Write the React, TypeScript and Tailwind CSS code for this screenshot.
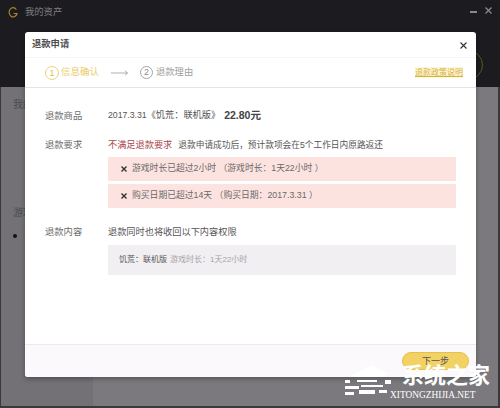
import React from "react";

const cjk = { fontFamily: '"Liberation Sans","Noto Sans CJK SC",sans-serif' };

function Row({ label, children, className }: { label: string; children: React.ReactNode; className?: string }) {
  return (
    <div className={"flex " + (className ?? "")}>
      <div className="w-[63px] shrink-0 text-[9.3px] leading-[16px] text-[#6b6b6b]">{label}</div>
      <div className="flex-1 min-w-0">{children}</div>
    </div>
  );
}

function Fail({ text }: { text: string }) {
  return (
    <div className="h-[24px] bg-[#fde3df] flex items-center pl-[13px] text-[8.8px] text-[#6a6a6a] whitespace-nowrap">
      <svg width="6" height="6" viewBox="0 0 6 6" className="shrink-0">
        <path d="M.5 .5L5.5 5.5M5.5 .5L.5 5.5" stroke="#333" strokeWidth="1.4" />
      </svg>
      <span className="ml-[5px]">{text}</span>
    </div>
  );
}

export default function App() {
  return (
    <div style={cjk} className="relative w-[500px] h-[408px] overflow-hidden bg-[#7b797d]">
      {/* Background window */}
      <div className="h-[87px] bg-[#1c1b1f] flex items-start justify-between pl-[8px] pr-[8px] pt-[5px]">
        <div className="flex items-center">
          <svg width="10" height="13" viewBox="0 0 10 13" fill="none">
            <path d="M8.3 3.5A4 4.6 0 1 0 9 7.5H5.5" stroke="#a8842a" strokeWidth="1.2" />
          </svg>
          <span className="ml-[7px] text-[9.3px] leading-[14px] text-[#807f82]">我的资产</span>
        </div>
        <div className="flex items-center gap-[8px] pt-[2px]">
          <div className="w-[7px] h-[2px] bg-[#8a898c] mt-[2px]" />
          <svg width="7" height="7" viewBox="0 0 7 7">
            <path d="M.5 .5L6.5 6.5M6.5 .5L.5 6.5" stroke="#8a898c" strokeWidth="1.3" />
          </svg>
        </div>
      </div>
      <div className="flex h-[321px] border-l border-r-2 border-b-2 border-[#39383b]">
        <div className="w-[92px] bg-[#737175] pl-[12px]">
          <div className="pt-[11px] text-[10px] leading-[14px] text-[#4c4b4e]">我的</div>
          <div className="pt-[94px] text-[10px] leading-[14px] text-[#4c4b4e]">游戏</div>
          <div className="pt-[14px] flex">
            <div className="w-[4px] h-[4px] rounded-full bg-[#141414]" />
          </div>
        </div>
        <div className="flex-1 bg-[#7b797d]" />
      </div>

      {/* Ring behind the dialog */}
      <div className="absolute left-[453px] top-[50px] w-[30px] h-[30px] rounded-full border border-[#5e5322]" />

      {/* Modal */}
      <div className="absolute left-[25px] top-[32px] w-[451px] h-[345px] bg-white rounded-[3px] flex flex-col shadow-[0_2px_5px_rgba(0,0,0,0.3)]">
        <div className="h-[26px] shrink-0 flex items-center justify-between pl-[7px] pr-[9px] border-b border-[#f6f5f6] pt-[1px]">
          <span className="text-[9.3px] font-bold text-[#4f4f4f]">退款申请</span>
          <svg width="7" height="7" viewBox="0 0 7 7">
            <path d="M.5 .5L6.5 6.5M6.5 .5L.5 6.5" stroke="#333" strokeWidth="1.1" />
          </svg>
        </div>
        <div className="h-[30px] shrink-0 flex items-center border-b border-[#e4e3e5] pl-[20px] pr-[13px]">
          <div className="w-[14px] h-[14px] rounded-full border border-[#edd177] text-[#dcbc55] text-[9px] leading-[12px] text-center">1</div>
          <span className="ml-[2px] text-[9.5px] text-[#ebcb66]">信息确认</span>
          <svg width="17" height="6" viewBox="0 0 17 6" className="ml-[12px]" fill="none">
            <path d="M0 3H16.5M14 .8L16.5 3L14 5.2" stroke="#8c8c8c" strokeWidth="0.7" />
          </svg>
          <div className="ml-[12px] w-[13px] h-[13px] rounded-full border border-[#a5a5a5] text-[#8c8c8c] text-[9px] leading-[11px] text-center">2</div>
          <span className="ml-[3px] text-[9.3px] text-[#a0a0a0]">退款理由</span>
          <span className="ml-auto text-[8px] leading-[11px] text-[#d9b23c] underline bg-[#fdf6d8]">退款政策说明</span>
        </div>
        <div className="flex-1 pl-[20px] pr-[20px] pt-[20px] flex flex-col">
          <Row label="退款商品">
            <div className="flex items-center h-[16px] text-[9.2px] text-[#555] whitespace-nowrap">
              <span className="text-[8.7px]">2017.3.31</span>
              <span>《饥荒：联机版》</span>
              <span className="ml-[4px] text-[10.5px] font-bold text-[#444]">22.80元</span>
            </div>
          </Row>
          <Row label="退款要求" className="mt-[13px]">
            <div className="text-[9.2px] leading-[16px] text-[#555] whitespace-nowrap">
              <span className="text-[#a8474c]">不满足退款要求</span>
              <span className="ml-[6px] text-[8.7px]">退款申请成功后，预计款项会在5个工作日内原路返还</span>
            </div>
            <div className="mt-[4px] flex flex-col gap-[3px]">
              <Fail text="游戏时长已超过2小时 （游戏时长：1天22小时 ）" />
              <Fail text="购买日期已超过14天 （购买日期：2017.3.31 ）" />
            </div>
          </Row>
          <Row label="退款内容" className="mt-[16px]">
            <div className="text-[9.2px] leading-[16px] text-[#555]">退款同时也将收回以下内容权限</div>
            <div className="mt-[5px] h-[30px] bg-[#f1eff2] flex items-center pl-[11px] text-[8px] text-[#555] whitespace-nowrap">
              <span>饥荒：联机版</span>
              <span className="ml-[3px] text-[#a5a3a6]">游戏时长：1天22小时</span>
            </div>
          </Row>
        </div>
        <div className="h-[33px] shrink-0 bg-[#fbf9fb] border-t border-[#ece9ec] rounded-b-[3px]" />
      </div>

      {/* Next button */}
      <div className="absolute left-[402px] top-[352px] w-[67px] h-[18px] rounded-full bg-[#f3d265] border border-[#e6c04d] text-[9px] leading-[16px] text-center text-[#555]">
        下一步
      </div>

      {/* Watermark */}
      <div className="absolute left-[345px] top-[362px] w-[152px] h-[40px]">
        <svg width="52" height="34" viewBox="0 0 52 34" className="absolute left-0 top-[1px]">
          <path d="M4 14L26 2L44 11L38 14H8Z" fill="#fff" />
          <path d="M0 17H5V20H0ZM0 23H14V26H0ZM0 29H9V32H0ZM12 17H32V19H12ZM16 22H38V24H16ZM14 27H30V31H14ZM34 27H42V30H34ZM40 17H46V21H40Z" fill="#fff" />
        </svg>
        <span className="absolute left-[57px] top-[1px] text-[22px] leading-[25px] font-bold text-white whitespace-nowrap">系统之家</span>
        <span className="absolute left-[45px] top-[28px] text-[9.4px] leading-[11px] text-white whitespace-nowrap" style={{ fontFamily: '"Liberation Serif",serif' }}>XITONGZHIJIA.NET</span>
      </div>
    </div>
  );
}
